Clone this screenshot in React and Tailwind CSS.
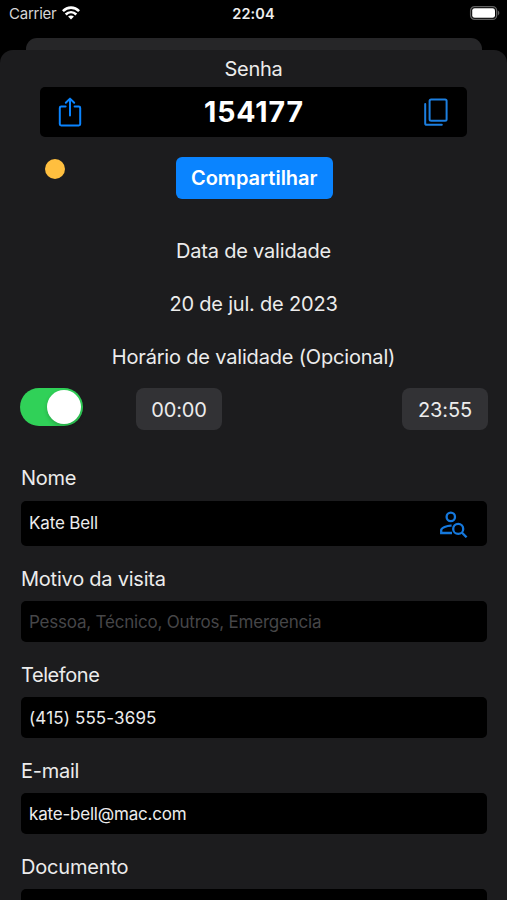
import React from "react";

function StatusBar() {
  return (
    <header className="grid h-[38px] grid-cols-3 px-[9px] pt-[3px]">
      <div className="flex h-[21px] items-center gap-[6px]">
        <span className="text-[15px] leading-[21px] tracking-[-0.25px] text-[#d6d6d6]">Carrier</span>
        <svg className="-mt-[2px] h-[14px] w-[18px]" viewBox="0 0 18 14" fill="none" stroke="#fff" strokeWidth="2.6">
          <path d="M0.9 5.2C5.5 0.4 12.5 0.4 17.1 5.2" />
          <path d="M3.7 8.5C6.8 5.5 11.2 5.5 14.3 8.5" />
          <path d="M9 13.6L6.1 10.6C7.8 9 10.2 9 11.9 10.6Z" fill="#fff" stroke="none" />
        </svg>
      </div>
      <div className="h-[21px] text-center text-[14.5px] font-semibold leading-[21px] tracking-[0.1px] text-[#eee]">22:04</div>
      <div className="flex h-[21px] items-center justify-end">
        <svg className="-mr-[2px] -mt-[1px] h-[16px] w-[31px]" viewBox="0 0 31 16">
          <rect x="1.6" y="1.6" width="26" height="12.8" rx="4" fill="none" stroke="#626262" strokeWidth="1.3" />
          <rect x="3.2" y="3.2" width="22.8" height="9.6" rx="2.4" fill="#fff" />
          <path d="M28.8 5.6C30.8 6.4 30.8 9.6 28.8 10.4Z" fill="#626262" />
        </svg>
      </div>
    </header>
  );
}

function ShareIcon() {
  return (
    <svg className="h-[32px] w-[24px]" viewBox="0 0 24 32" fill="none" stroke="#0a84ff" strokeWidth="2" strokeLinecap="round" strokeLinejoin="round">
      <path d="M7.6 10.6H3.2Q1.8 10.6 1.8 12V28.1Q1.8 29.5 3.2 29.5H20.8Q22.2 29.5 22.2 28.1V12Q22.2 10.6 20.8 10.6H16.6" />
      <path d="M12 19.4V2.8M7.8 6.8L12 2.6L16.2 6.8" />
    </svg>
  );
}

function CopyIcon() {
  return (
    <svg className="h-[30px] w-[26px]" viewBox="0 0 26 30" fill="none" stroke="#1c7fe0" strokeWidth="2" strokeLinecap="round" strokeLinejoin="round">
      <rect x="6.6" y="2.4" width="17" height="21.4" rx="1.5" />
      <path d="M2.2 7V26.2Q2.2 27.8 3.8 27.8H18.8" />
    </svg>
  );
}

function PersonSearchIcon() {
  return (
    <svg className="-mr-px h-[28px] w-[28px]" viewBox="0 0 28 28" fill="none" stroke="#1578dc" strokeWidth="2.3">
      <circle cx="10.8" cy="6.9" r="4.2" />
      <path d="M11.6 15.6C6.8 15.4 1.2 18 1.2 20.1V23H12" />
      <circle cx="18.2" cy="18.9" r="5" />
      <path d="M21.8 22.5L26.6 27.3" />
    </svg>
  );
}

function TimeChip({ children }) {
  return (
    <div className="flex h-[42px] w-[86px] items-center justify-center rounded-[8px] bg-[#323235] pt-[2px] text-[20px] tracking-[-0.1px]">
      {children}
    </div>
  );
}

function Field({ label, labelClass, value, valueClass, tall, icon }) {
  return (
    <div className="shrink-0">
      <div className={`flex items-center pb-[2px] text-[20px] ${tall ? "h-[45px]" : "mt-[13px] h-[42px] pb-[3px]"} ${labelClass}`}>
        {label}
      </div>
      <div className={`flex items-center justify-between rounded-[5px] bg-black pl-[8px] pr-[20px] text-[17px] ${tall ? "h-[45px] pt-px" : "h-[41px] pt-[2px]"}`}>
        <span className={valueClass}>{value}</span>
        {icon}
      </div>
    </div>
  );
}

export default function App() {
  return (
    <div className="h-[900px] w-[507px] overflow-hidden bg-black font-['Inter',sans-serif] text-[#ececec]">
      <StatusBar />
      <div className="mx-[25.5px] h-[12px] rounded-t-[11px] bg-[#262628]" />
      <main className="flex h-[850px] flex-col overflow-hidden rounded-t-[13px] bg-[#1c1c1e]">
        <h1 className="flex h-[37px] shrink-0 items-center justify-center text-[20px] tracking-[-0.3px]">Senha</h1>
        <div className="mx-[40px] flex h-[50px] shrink-0 items-center justify-between rounded-[5px] bg-black pl-[18px] pr-[18px]">
          <ShareIcon />
          <span className="ml-[3px] text-[28.5px] font-bold tracking-[0.9px] text-white">154177</span>
          <CopyIcon />
        </div>
        <div className="mt-[20px] grid h-[42px] shrink-0 grid-cols-[1fr_157px_1fr] pl-[44.5px] pr-[43px]">
          <div className="mt-[2px] h-[20px] w-[20px] rounded-full bg-[#ffbf3f]" />
          <button className="rounded-[6px] bg-[#0a84ff] text-[20px] font-semibold tracking-[0px] text-white">Compartilhar</button>
        </div>
        <section className="mt-[26px] shrink-0 text-center text-[20px] leading-[53px]">
          <p className="h-[53px] tracking-[-0.2px]">Data de validade</p>
          <p className="h-[53px] tracking-[-0.2px]">20 de jul. de 2023</p>
          <p className="h-[57px] tracking-[-0.18px]">Horário de validade (Opcional)</p>
        </section>
        <div className="flex h-[42px] shrink-0 items-start pl-[20px] pr-[19px]">
          <div className="flex h-[38px] w-[63px] items-center justify-end rounded-full bg-[#30d158] pr-[2px]">
            <div className="h-[34px] w-[34px] rounded-full bg-white shadow-[0_2px_4px_rgba(0,0,0,0.2)]" />
          </div>
          <div className="ml-[53px] flex flex-1 justify-between">
            <TimeChip>00:00</TimeChip>
            <TimeChip>23:55</TimeChip>
          </div>
        </div>
        <form className="mt-[26px] flex flex-col pl-[21px] pr-[20px]">
          <Field tall label="Nome" labelClass="tracking-[-0.3px]" value="Kate Bell" valueClass="tracking-[-0.15px]" icon={<PersonSearchIcon />} />
          <Field label="Motivo da visita" labelClass="tracking-[-0.23px]" value="Pessoa, Técnico, Outros, Emergencia" valueClass="text-[#464648] tracking-[-0.21px]" />
          <Field label="Telefone" labelClass="tracking-[-0.42px]" value="(415) 555-3695" valueClass="tracking-[0.14px]" />
          <Field label="E-mail" labelClass="tracking-[-0.25px]" value="kate-bell@mac.com" valueClass="tracking-[-0.2px]" />
          <Field label="Documento" labelClass="tracking-[-0.18px]" value="" valueClass="" />
        </form>
      </main>
    </div>
  );
}
